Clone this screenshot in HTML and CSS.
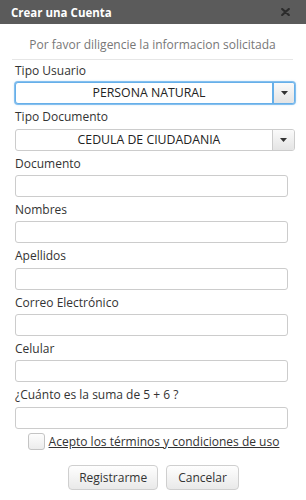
FILE: index.html
```html
<!DOCTYPE html>
<html lang="es">
<head>
<meta charset="utf-8">
<title>Crear una Cuenta</title>
<link rel="stylesheet" href="styles.css">
</head>
<body>
<div class="dialog">
  <div class="titlebar">
    <span class="title">Crear una Cuenta</span>
    <svg class="close" width="9" height="8" viewBox="0 0 9 8" aria-hidden="true">
      <path d="M1.2 1 L7.8 7 M7.8 1 L1.2 7" stroke="#2c2c2c" stroke-width="2.2" stroke-linecap="round"/>
    </svg>
  </div>
  <div class="content">
    <p class="intro">Por favor diligencie la informacion solicitada</p>
    <div class="fields">
      <div class="field">
        <label class="label">Tipo Usuario</label>
        <div class="select is-focus">
          <span class="select-text">PERSONA NATURAL</span>
          <span class="select-btn"><svg width="7" height="4" viewBox="0 0 7 4"><path d="M0 0 H7 L3.5 4 Z" fill="#333"/></svg></span>
        </div>
      </div>
      <div class="field">
        <label class="label">Tipo Documento</label>
        <div class="select">
          <span class="select-text">CEDULA DE CIUDADANIA</span>
          <span class="select-btn"><svg width="7" height="4" viewBox="0 0 7 4"><path d="M0 0 H7 L3.5 4 Z" fill="#333"/></svg></span>
        </div>
      </div>
      <div class="field">
        <label class="label">Documento</label>
        <input class="input" type="text">
      </div>
      <div class="field">
        <label class="label">Nombres</label>
        <input class="input" type="text">
      </div>
      <div class="field">
        <label class="label">Apellidos</label>
        <input class="input" type="text">
      </div>
      <div class="field">
        <label class="label">Correo Electrónico</label>
        <input class="input" type="text">
      </div>
      <div class="field">
        <label class="label">Celular</label>
        <input class="input" type="text">
      </div>
      <div class="field">
        <label class="label">¿Cuánto es la suma de 5 + 6 ?</label>
        <input class="input" type="text">
      </div>
    </div>
    <div class="terms">
      <span class="checkbox"></span>
      <a class="terms-link" href="#">Acepto los términos y condiciones de uso</a>
    </div>
    <div class="actions">
      <button class="btn btn-register" type="button">Registrarme</button>
      <button class="btn btn-cancel" type="button">Cancelar</button>
    </div>
  </div>
</div>
</body>
</html>
```

FILE: styles.css
```css
* { box-sizing: border-box; }

html, body {
  margin: 0;
  padding: 0;
  background: #fff;
}

body {
  font-family: "Open Sans", "Liberation Sans", sans-serif;
  color: #333;
}

.dialog {
  width: 306px;
  height: 500px;
  background: #fff;
}

.titlebar {
  height: 24px;
  background: #5b5b5b;
  display: flex;
  align-items: center;
  justify-content: space-between;
  padding: 1px 16px 0 11px;
}

.title {
  color: #fff;
  font-weight: 700;
  font-size: 11.5px;
  line-height: 23px;
}

.close {
  display: block;
  margin-top: -1px;
}

.content {
  padding: 0 11px 0 12px;
}

.intro {
  margin: 12px 2px 0 0;
  padding-bottom: 5px;
  border-bottom: 1px solid #e6e6e6;
  font-size: 12px;
  line-height: 18px;
  color: #777;
  text-align: center;
}

.fields {
  padding-left: 3px;
  padding-top: 2px;
}

.field {
  display: flex;
  flex-direction: column;
  margin-bottom: 4px;
}

.label {
  font-size: 12px;
  line-height: 17.33px;
  margin-bottom: 3px;
  color: #333;
}

.input {
  height: 22px;
  width: 273px;
  border: 1px solid #ccc;
  border-radius: 3px;
  background: #fff;
  padding: 0 6px;
  font-family: inherit;
  font-size: 12px;
  margin: 0;
}

.select {
  height: 22px;
  width: 280px;
  display: flex;
  border: 1px solid #ccc;
  border-radius: 3px;
  background: #fff;
  overflow: hidden;
}

.select.is-focus {
  border-color: #66afe9;
  box-shadow: 0 0 0 1px rgba(102, 175, 233, 0.75), 0 0 3px rgba(102, 175, 233, 0.6);
}

.select-text {
  flex: 1;
  text-align: center;
  padding-left: 10px;
  font-size: 12.3px;
  line-height: 20px;
  color: #222;
}

.select-btn {
  width: 22px;
  display: flex;
  align-items: center;
  justify-content: center;
  border-left: 1px solid #ccc;
  background: linear-gradient(#fafafa, #e4e4e4);
}

.select.is-focus .select-btn {
  border-left: 2px solid #66afe9;
}

.terms {
  display: flex;
  align-items: center;
  justify-content: center;
  gap: 4px;
  height: 18px;
  margin-top: 2px;
}

.checkbox {
  width: 17px;
  height: 17px;
  border: 1px solid #c4c4c4;
  border-radius: 3px;
  background: linear-gradient(#fdfdfd, #ececec);
}

.terms-link {
  font-size: 12px;
  line-height: 18px;
  color: #333;
  text-decoration: underline;
}

.actions {
  display: flex;
  justify-content: center;
  gap: 8px;
  margin-top: 14px;
}

.btn {
  height: 25px;
  padding: 0 10px;
  border: 1px solid #cfcfcf;
  border-radius: 4px;
  background: linear-gradient(#fefefe, #e9e9e9);
  font-family: inherit;
  font-size: 12px;
  line-height: 23px;
  color: #333;
}

.btn-cancel {
  padding: 0 11px;
}
```
